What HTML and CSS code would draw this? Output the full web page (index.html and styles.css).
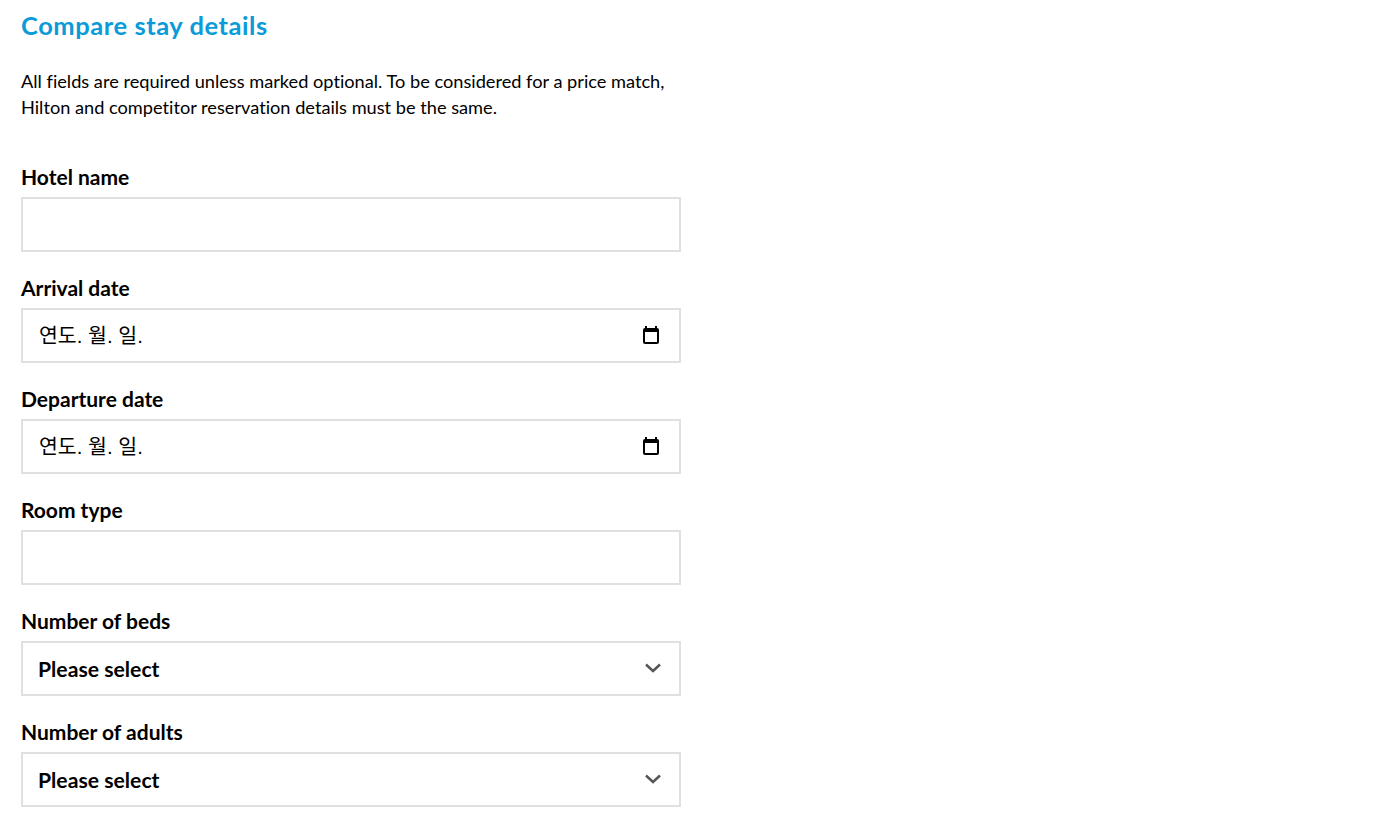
FILE: index.html
```html
<!DOCTYPE html>
<html lang="en">
<head>
<meta charset="utf-8">
<title>Compare stay details</title>
<link rel="stylesheet" href="styles.css">
</head>
<body>
<main class="form">
  <h2 class="title">Compare stay details</h2>
  <p class="intro">All fields are required unless marked optional. To be considered for a price match, Hilton and competitor reservation details must be the same.</p>
  <div class="fields">
    <div class="field"><div class="label">Hotel name</div><div class="control"></div></div>
    <div class="field"><div class="label">Arrival date</div><div class="control"><span class="date">연도. 월. 일.</span>
      <svg class="cal" viewBox="0 0 18 20" width="18" height="20"><path d="M4 1v3M14 1v3" stroke="#000" stroke-width="2" fill="none"/><rect x="1" y="3" width="16" height="16" rx="2" fill="#000"/><rect x="3" y="7" width="12" height="10" fill="#fff"/></svg></div></div>
    <div class="field"><div class="label">Departure date</div><div class="control"><span class="date">연도. 월. 일.</span>
      <svg class="cal" viewBox="0 0 18 20" width="18" height="20"><path d="M4 1v3M14 1v3" stroke="#000" stroke-width="2" fill="none"/><rect x="1" y="3" width="16" height="16" rx="2" fill="#000"/><rect x="3" y="7" width="12" height="10" fill="#fff"/></svg></div></div>
    <div class="field"><div class="label">Room type</div><div class="control"></div></div>
    <div class="field"><div class="label">Number of beds</div><div class="control select"><span>Please select</span>
      <svg class="chev" viewBox="0 0 16 10" width="16" height="10"><path d="M1 1.5l7 6.5 7-6.5" stroke="#555" stroke-width="2.4" fill="none"/></svg></div></div>
    <div class="field"><div class="label">Number of adults</div><div class="control select"><span>Please select</span>
      <svg class="chev" viewBox="0 0 16 10" width="16" height="10"><path d="M1 1.5l7 6.5 7-6.5" stroke="#555" stroke-width="2.4" fill="none"/></svg></div></div>
  </div>
</main>
</body>
</html>
```
FILE: styles.css
```css
html, body { margin: 0; padding: 0; background: #fff; }
body { font-family: Lato, "Noto Sans CJK KR", sans-serif; color: #000; height: 822px; overflow: hidden; font-variant-ligatures: none; }
.form { width: 660px; padding: 10px 0 0 21px; }
.title { margin: 0; font-size: 25.5px; line-height: 30px; font-weight: 700; letter-spacing: 0.55px; color: #0a9bd8; }
.intro { margin: 28px 0 0; font-size: 18.2px; line-height: 26px; }
.fields { margin-top: 45px; display: flex; flex-direction: column; gap: 24px; }
.field { display: flex; flex-direction: column; }
.label { font-size: 21px; line-height: 24px; font-weight: 700; margin-bottom: 8px; }
.control { box-sizing: border-box; height: 55px; border: 2px solid #e0e0e0; display: flex; align-items: center; justify-content: space-between; padding: 0 19px 0 15px; }
.date { font-family: "Liberation Sans", "Noto Sans CJK KR", sans-serif; font-size: 20.5px; padding: 0 0 4px 1px; }
.select { font-size: 21.2px; font-weight: 700; padding-right: 18px; }
.cal, .chev { display: block; margin-bottom: 2px; }
```
